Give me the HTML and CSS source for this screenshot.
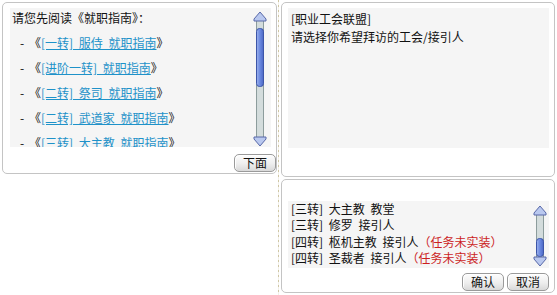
FILE: index.html
```html
<!DOCTYPE html>
<html lang="zh-CN">
<head>
    <meta charset="UTF-8">
    <title>职业工会联盟</title>
    <link rel="stylesheet" href="styles.css">
</head>
<body>
    <div class="screen">
        <div class="col-left">
            <div class="panel panel-guide">
                <div class="inset guide-box">
                    <div class="guide-list">
                        <p class="guide-title">请您先阅读《就职指南》：</p>
                        <ul>
                            <li><span class="dash">-</span>《<a href="#">[一转] 服侍 就职指南</a>》</li>
                            <li><span class="dash">-</span>《<a href="#">[进阶一转] 就职指南</a>》</li>
                            <li><span class="dash">-</span>《<a href="#">[二转] 祭司 就职指南</a>》</li>
                            <li><span class="dash">-</span>《<a href="#">[二转] 武道家 就职指南</a>》</li>
                            <li><span class="dash">-</span>《<a href="#">[三转] 大主教 就职指南</a>》</li>
                        </ul>
                    </div>
                    <svg class="scroll scroll-tall" width="14" height="136" viewBox="0 0 14 136">
                        <defs>
                            <linearGradient id="thumbA" x1="0" x2="1" y1="0" y2="0">
                                <stop offset="0" stop-color="#9fb4ee"/>
                                <stop offset="0.5" stop-color="#6a88e0"/>
                                <stop offset="1" stop-color="#4c68c4"/>
                            </linearGradient>
                        </defs>
                        <rect x="3.5" y="8.5" width="7" height="119" fill="#d3dcdc" stroke="#8c9c9c"/>
                        <rect x="3.5" y="17.5" width="7" height="58" rx="3" fill="url(#thumbA)" stroke="#3c55a8"/>
                        <polygon points="7,1 13,8 13,10 1,10 1,8" fill="#b9c8ef" stroke="#5868a8"/>
                        <polygon points="1,126 13,126 13,128 7,135 1,128" fill="#b9c8ef" stroke="#5868a8"/>
                    </svg>
                </div>
                <div class="btn-row">
                    <button class="btn">下面</button>
                </div>
            </div>
        </div>

        <div class="divider"></div>

        <div class="col-right">
            <div class="panel panel-info">
                <div class="inset info-box">
                    <p>[职业工会联盟]</p>
                    <p>请选择你希望拜访的工会/接引人</p>
                </div>
            </div>

            <div class="panel panel-pick">
                <div class="inset pick-box">
                    <ul class="pick-list">
                        <li>[三转] 大主教 教堂</li>
                        <li>[三转] 修罗 接引人</li>
                        <li>[四转] 枢机主教 接引人<span class="todo">（任务未实装）</span></li>
                        <li>[四转] 圣裁者 接引人<span class="todo">（任务未实装）</span></li>
                    </ul>
                    <svg class="scroll scroll-short" width="14" height="62" viewBox="0 0 14 62">
                        <defs>
                            <linearGradient id="thumbB" x1="0" x2="1" y1="0" y2="0">
                                <stop offset="0" stop-color="#9fb4ee"/>
                                <stop offset="0.5" stop-color="#6a88e0"/>
                                <stop offset="1" stop-color="#4c68c4"/>
                            </linearGradient>
                        </defs>
                        <rect x="3.5" y="8.5" width="7" height="45" fill="#d3dcdc" stroke="#8c9c9c"/>
                        <rect x="3.5" y="33.5" width="7" height="18" rx="3" fill="url(#thumbB)" stroke="#3c55a8"/>
                        <polygon points="7,1 13,8 13,10 1,10 1,8" fill="#b9c8ef" stroke="#5868a8"/>
                        <polygon points="1,52 13,52 13,54 7,61 1,54" fill="#b9c8ef" stroke="#5868a8"/>
                    </svg>
                </div>
                <div class="btn-row">
                    <button class="btn">确认</button>
                    <button class="btn">取消</button>
                </div>
            </div>
        </div>
    </div>
</body>
</html>
```

FILE: styles.css
```css
* {
    box-sizing: border-box;
    margin: 0;
    padding: 0;
}

body {
    width: 557px;
    height: 295px;
    background: #ffffff;
    color: #111111;
    font-family: "Noto Sans CJK SC", "Liberation Sans", sans-serif;
    font-size: 12px;
    line-height: 16px;
    overflow: hidden;
}

.screen {
    display: flex;
    height: 295px;
}

/* columns */
.col-left {
    width: 277px;
    padding: 2px 0 0 2px;
}

.divider {
    width: 4px;
    background: repeating-linear-gradient(180deg, #cfc6a4 0 2px, #f2f0e8 2px 5px);
    background-size: 1px 100%;
    background-repeat: no-repeat;
    background-position: 1px 0;
}

.col-right {
    flex: 1;
    display: flex;
    flex-direction: column;
    gap: 2px;
    padding: 2px 2px 0 0;
}

/* panels */
.panel {
    background: #ffffff;
    border: 1px solid #c4c4c4;
    border-radius: 5px;
    display: flex;
    flex-direction: column;
}

.inset {
    background: #f5f5f5;
}

.panel-guide {
    width: 275px;
    height: 172px;
    padding: 5px 0 0 7px;
}

.guide-box {
    display: flex;
    height: 139px;
    width: 261px;
    overflow: hidden;
}

.guide-list {
    flex: 1;
    padding: 2px 0 0 2px;
}

.guide-title {
    height: 17px;
}

.guide-list ul {
    list-style: none;
    padding-left: 8px;
}

.guide-list li {
    margin-top: 8px;
    height: 17px;
    white-space: nowrap;
    word-spacing: 3px;
}

.dash {
    display: inline-block;
    width: 9px;
}

.guide-list a {
    color: #1e92c9;
    text-decoration: underline;
}

.scroll {
    display: block;
    flex: none;
}

.scroll-tall {
    margin: 3px 4px 0 0;
}

.btn-row {
    display: flex;
    justify-content: flex-end;
    gap: 3px;
    margin-top: auto;
    padding: 0 0 1px 0;
}

.btn {
    font-family: "Noto Sans CJK SC", "Liberation Sans", sans-serif;
    font-size: 12px;
    line-height: 14px;
    color: #111111;
    width: 42px;
    height: 18px;
    border: 1px solid #9a9a9a;
    border-radius: 5px;
    background: linear-gradient(180deg, #fdfdfd 0%, #eeeeee 55%, #d9d9d9 100%);
    box-shadow: inset 1px 1px 0 #ffffff;
}

.panel-info {
    height: 175px;
    padding: 5px 5px 0 6px;
}

.info-box {
    height: 140px;
    padding: 2px 0 0 3px;
    line-height: 18px;
}

.panel-pick {
    height: 114px;
    padding: 21px 5px 0 6px;
}

.pick-box {
    display: flex;
    height: 67px;
}

.pick-list {
    flex: 1;
    list-style: none;
    padding: 0 0 0 3px;
    line-height: 16.3px;
    word-spacing: 3px;
}

.pick-list li {
    white-space: nowrap;
}

.todo {
    color: #cc1f1f;
    word-spacing: 0;
}

.scroll-short {
    margin: 4px 2px 0 0;
}
```
